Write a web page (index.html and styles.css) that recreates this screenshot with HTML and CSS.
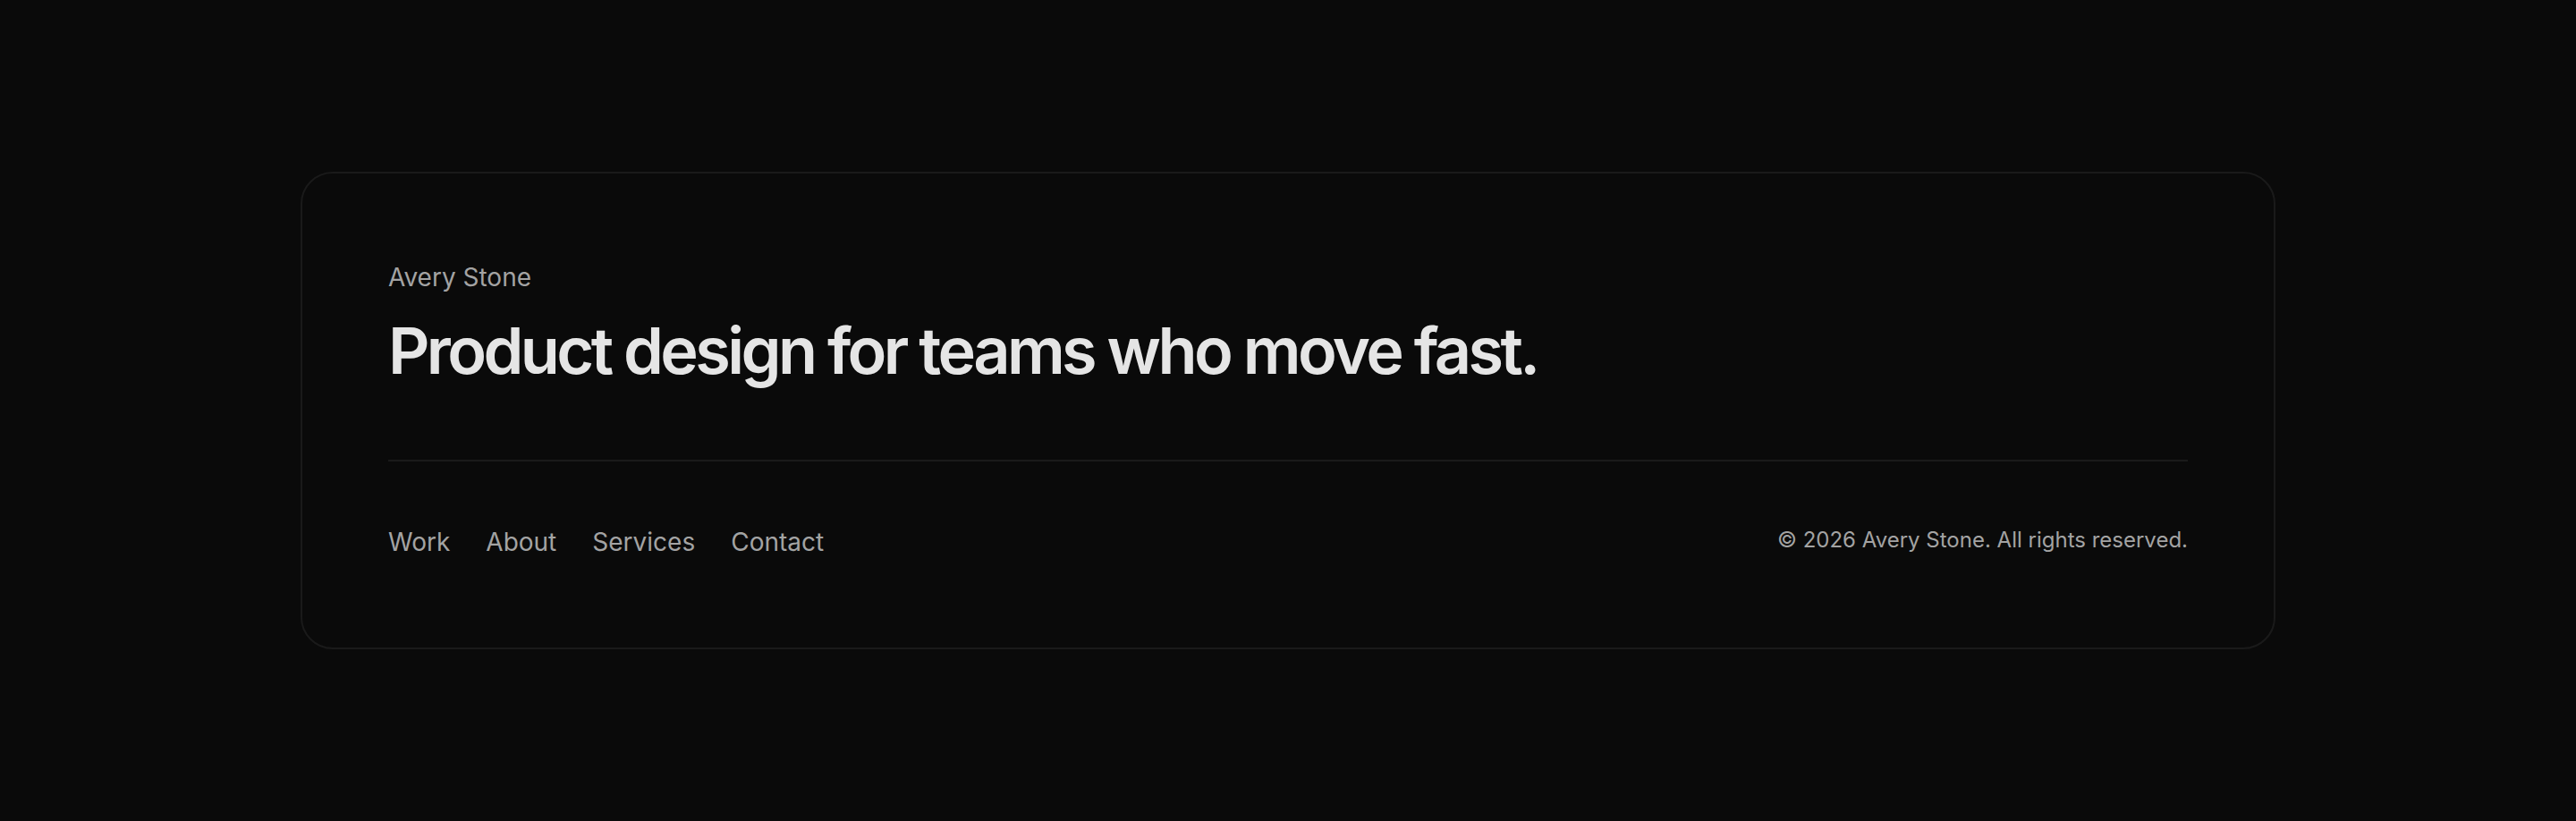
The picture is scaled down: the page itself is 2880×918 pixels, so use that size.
FILE: index.html
```html
<!DOCTYPE html>
<html lang="en">
<head>
<meta charset="utf-8">
<meta name="viewport" content="width=device-width, initial-scale=1">
<title>Avery Stone</title>
<link rel="stylesheet" href="styles.css">
</head>
<body>
<footer class="footer">
  <div class="card">
    <div class="intro">
      <p class="name">Avery Stone</p>
      <h2 class="headline">Product design for teams who move fast.</h2>
    </div>
    <div class="bottom">
      <nav class="links" aria-label="Footer">
        <a href="#work">Work</a>
        <a href="#about">About</a>
        <a href="#services">Services</a>
        <a href="#contact">Contact</a>
      </nav>
      <p class="copyright">© 2026 Avery Stone. All rights reserved.</p>
    </div>
  </div>
</footer>
</body>
</html>
```

FILE: styles.css
```css
* {
  box-sizing: border-box;
  margin: 0;
}

body {
  background: #0a0a0a;
  color: #e5e5e5;
  font-family: Inter, "Liberation Sans", sans-serif;
}

.footer {
  padding: 192px 48px;
}

.card {
  max-width: 2208px;
  margin: 0 auto;
  padding: 96px;
  border: 2px solid #1a1a1a;
  border-radius: 36px;
}

.intro {
  padding-bottom: 84px;
  border-bottom: 2px solid #1a1a1a;
}

.name {
  color: #a3a3a3;
  font-size: 28px;
  line-height: 40px;
}

.headline {
  margin-top: 24px;
  font-size: 72px;
  font-weight: 600;
  line-height: 76px;
  letter-spacing: -0.05em;
}

.bottom {
  display: flex;
  flex-wrap: wrap;
  justify-content: space-between;
  gap: 24px 40px;
  padding-top: 68px;
}

.links {
  display: flex;
  flex-wrap: wrap;
  gap: 16px 40px;
}

.links a {
  color: #a3a3a3;
  font-size: 28px;
  line-height: 44px;
  text-decoration: none;
}

.copyright {
  color: #a3a3a3;
  font-size: 24px;
  line-height: 40px;
}
```
